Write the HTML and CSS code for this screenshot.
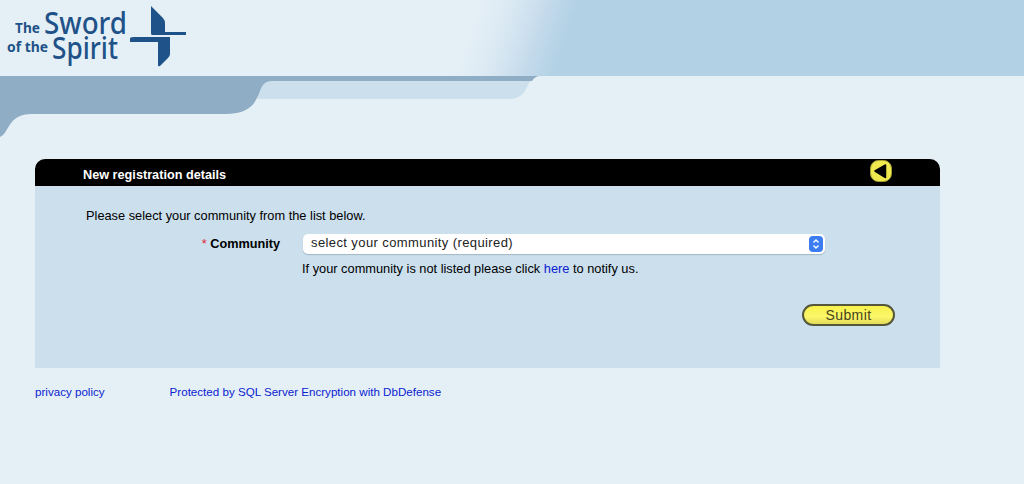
FILE: index.html
```html
<!DOCTYPE html>
<html lang="en">
<head>
<meta charset="utf-8">
<title>New registration details</title>
<link rel="stylesheet" href="styles.css">
</head>
<body>
<header class="banner">
  <svg class="banner-art" width="1024" height="137" viewBox="0 0 1024 137" aria-hidden="true">
    <defs>
      <linearGradient id="sky" gradientUnits="userSpaceOnUse" x1="462" y1="35" x2="556" y2="67">
        <stop offset="0" stop-color="#e5f0f6"/>
        <stop offset="0.25" stop-color="#e0ecf5"/>
        <stop offset="0.5" stop-color="#d3e4f0"/>
        <stop offset="0.75" stop-color="#c2d9eb"/>
        <stop offset="1" stop-color="#b3d1e5"/>
      </linearGradient>
    </defs>
    <rect x="440" y="0" width="584" height="76" fill="url(#sky)"/>
    <path d="M0 76H541C534 76 531 79 528 85C524 94 520 99 507 99H258V81H540Z" fill="#cbdfed"/>
    <path d="M0 76H541C536 76 534 78 532 81H272C265 81 262 85 260 91C255 105 248 114 225 114H32C20 114 14 118 9 126C6 131 4 135 0 137Z" fill="#8fadc5"/>
    <g fill="#1f5288">
      <path d="M151 6L163 18Q165 20 165 24V32H186V35H152Q151 35 151 33Z"/>
      <path d="M130 38Q131 37 134 37H170V54Q170 56 168 58L160 66Q158 67 158 65V42H130Z"/>
    </g>
    <g class="logo-text">
      <text class="logo-small" x="15" y="33" textLength="25" lengthAdjust="spacingAndGlyphs">The</text>
      <text class="logo-big" x="44" y="34" textLength="83" lengthAdjust="spacingAndGlyphs">Sword</text>
      <text class="logo-small" x="7" y="52" textLength="41" lengthAdjust="spacingAndGlyphs">of the</text>
      <text class="logo-big" x="52" y="59" textLength="66" lengthAdjust="spacingAndGlyphs">Spirit</text>
    </g>
  </svg>
</header>
<main class="panel">
  <div class="panel-head">
    <h1 class="panel-title">New registration details</h1>
    <a class="back" href="#" aria-label="Back">
      <svg width="22" height="22" viewBox="0 0 22 22" aria-hidden="true">
        <rect x="0.5" y="0.5" width="21" height="21" rx="8" fill="#efe84f" stroke="#a8a234"/>
        <path d="M5 11L15.5 5V17.5Z" fill="#000" stroke="#000" stroke-width="1.5" stroke-linejoin="round"/>
      </svg>
    </a>
  </div>
  <div class="panel-body">
    <p class="intro">Please select your community from the list below.</p>
    <div class="field">
      <label class="field-label" for="community"><span class="req">*</span> Community</label>
      <div class="select">
        <span class="select-text">select your community (required)</span>
        <span class="select-btn">
          <svg width="10" height="12" viewBox="0 0 10 12" aria-hidden="true">
            <path d="M2.5 4.5L5 2L7.5 4.5M2.5 7.5L5 10L7.5 7.5" fill="none" stroke="#fff" stroke-width="1.4"/>
          </svg>
        </span>
      </div>
    </div>
    <p class="hint">If your community is not listed please click <a href="#">here</a> to notify us.</p>
    <div class="actions"><button class="submit" type="button">Submit</button></div>
  </div>
</main>
<footer class="foot">
  <a href="#">privacy policy</a>
  <a href="#">Protected by SQL Server Encryption with DbDefense</a>
</footer>
</body>
</html>
```
FILE: styles.css
```css
* { box-sizing: border-box; }
html, body { height: 100%; }
body {
  margin: 0;
  background: #e5f0f6;
  font-family: "Liberation Sans", Arial, sans-serif;
  font-size: 12px;
  color: #000;
  overflow: hidden;
}
a { color: #0a22d0; text-decoration: none; }
.banner { height: 137px; }
.banner-art { display: block; }
.logo-text { fill: #1f5288; font-family: "Noto Sans", sans-serif; }
.logo-small { font-size: 14px; font-weight: 700; }
.logo-big { font-size: 30px; font-weight: 500; }
.panel { width: 905px; margin: 22px 0 0 35px; }
.panel-head {
  height: 27px;
  background: #000;
  border-radius: 10px 10px 0 0;
  display: flex;
  align-items: center;
  justify-content: space-between;
  padding: 4px 48px 0;
}
.panel-title { margin: 0; font-size: 12.7px; font-weight: 700; color: #fff; }
.back { display: block; height: 22px; margin-top: -7px; }
.panel-body { height: 182px; background: #cbdfed; padding: 22px 45px 0 51px; }
.intro { margin: 0; line-height: 15px; font-size: 12.8px; }
.field { display: flex; align-items: center; margin-top: 11px; }
.field-label { width: 194px; text-align: right; font-size: 12.7px; font-weight: 700; }
.req { color: #e0202c; font-weight: 400; }
.select {
  width: 522px;
  height: 20px;
  margin-left: 23px;
  background: #fff;
  border-radius: 5px;
  box-shadow: 0 1px 1px rgba(90, 110, 130, .35);
  display: flex;
  align-items: center;
  justify-content: space-between;
  padding: 0 2px 0 8px;
  font-size: 13px;
  line-height: 18px;
  letter-spacing: .4px;
  color: #222;
}
.select-text { margin-top: -2px; }
.select-btn {
  width: 14px;
  height: 16px;
  background: #3b7cf0;
  border-radius: 4px;
  display: flex;
  align-items: center;
  justify-content: center;
}
.hint { margin: 7px 0 0 216px; line-height: 15px; font-size: 12.8px; }
.actions { display: flex; justify-content: flex-end; margin-top: 28px; }
.submit {
  width: 93px;
  height: 22px;
  padding: 0;
  border: 2px solid #55563a;
  border-radius: 11px;
  background: linear-gradient(#f8f24c, #fbf66a 60%, #e2dc58);
  font-family: "Liberation Sans", Arial, sans-serif;
  font-size: 14px;
  letter-spacing: .4px;
  color: #45451c;
}
.foot { display: flex; gap: 65px; margin: 16px 0 0 35px; line-height: 15px; font-size: 11.6px; }
```
